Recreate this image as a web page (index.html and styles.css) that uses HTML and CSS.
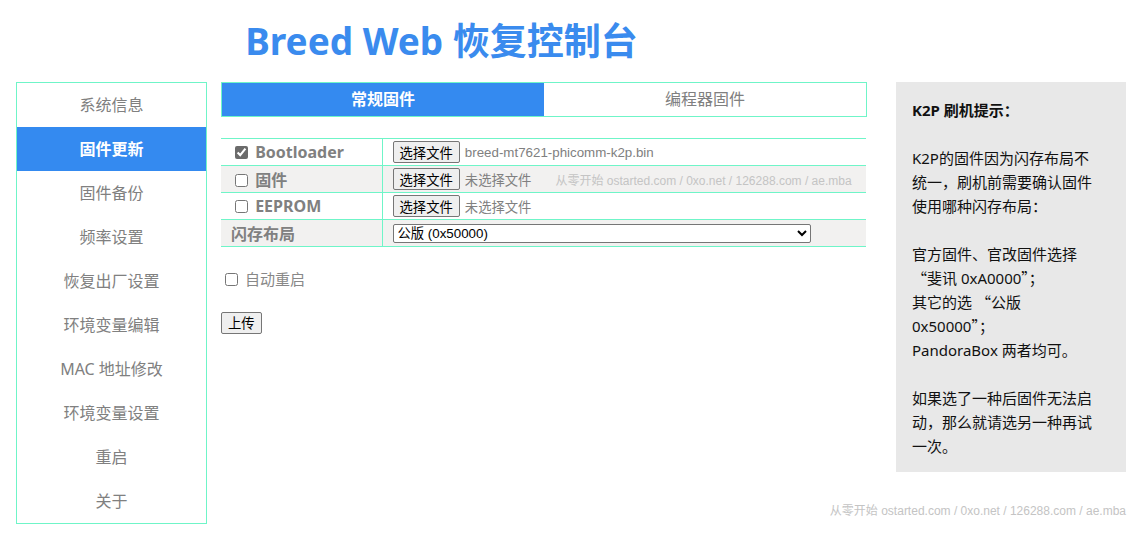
FILE: index.html
```html
<!DOCTYPE html>
<html lang="zh-CN">
<head>
<meta charset="utf-8">
<title>Breed Web 恢复控制台</title>
<link rel="stylesheet" href="styles.css">
</head>
<body>
<div class="page">
  <div class="left">
    <header class="header">
      <h1 class="title">Breed Web 恢复控制台</h1>
    </header>
    <div class="content">
      <nav class="sidebar">
        <a class="nav-item">系统信息</a>
        <a class="nav-item active">固件更新</a>
        <a class="nav-item">固件备份</a>
        <a class="nav-item">频率设置</a>
        <a class="nav-item">恢复出厂设置</a>
        <a class="nav-item">环境变量编辑</a>
        <a class="nav-item">MAC 地址修改</a>
        <a class="nav-item">环境变量设置</a>
        <a class="nav-item">重启</a>
        <a class="nav-item">关于</a>
      </nav>
      <main class="main">
        <div class="tabs">
          <div class="tab active">常规固件</div>
          <div class="tab">编程器固件</div>
        </div>
        <table class="fw-table">
          <tr>
            <td class="label"><input type="checkbox" class="cb cb-on" checked> Bootloader</td>
            <td class="field"><button class="btn">选择文件</button><span class="fname">breed-mt7621-phicomm-k2p.bin</span></td>
          </tr>
          <tr class="alt">
            <td class="label"><input type="checkbox" class="cb"> 固件</td>
            <td class="field"><button class="btn">选择文件</button><span class="fname">未选择文件</span><span class="watermark">从零开始 ostarted.com / 0xo.net / 126288.com / ae.mba</span></td>
          </tr>
          <tr>
            <td class="label"><input type="checkbox" class="cb"> EEPROM</td>
            <td class="field"><button class="btn">选择文件</button><span class="fname">未选择文件</span></td>
          </tr>
          <tr class="alt">
            <td class="label plain">闪存布局</td>
            <td class="field"><select class="sel"><option>公版 (0x50000)</option><option>斐讯 (0xA0000)</option></select></td>
          </tr>
        </table>
        <label class="reboot"><input type="checkbox" class="cb"> 自动重启</label>
        <div class="actions"><button class="btn">上传</button></div>
      </main>
    </div>
  </div>
  <aside class="right">
    <div class="tips">
      <p class="tips-title">K2P 刷机提示：</p>
      <p>K2P的固件因为闪存布局不<br>统一，刷机前需要确认固件<br>使用哪种闪存布局：</p>
      <p>官方固件、官改固件选择<br><span class="q">“</span>斐讯 0xA0000<span class="q">”；</span><br>其它的选 <span class="q">“</span>公版<br>0x50000<span class="q">”；</span><br>PandoraBox 两者均可。</p>
      <p>如果选了一种后固件无法启<br>动，那么就请选另一种再试<br>一次。</p>
    </div>
    <footer class="footer"><span>从零开始 ostarted.com / 0xo.net / 126288.com / ae.mba</span></footer>
  </aside>
</div>
</body>
</html>
```

FILE: styles.css
```css
* { box-sizing: border-box; }

body {
  margin: 0;
  background: #fff;
  font-family: "Noto Sans", "Noto Sans CJK SC", sans-serif;
  color: #808080;
}

.page {
  display: flex;
  padding: 0 16px;
}

.left {
  width: 851px;
  display: flex;
  flex-direction: column;
}

.header {
  height: 82px;
  display: flex;
  align-items: center;
  justify-content: center;
}

.title {
  margin: 0;
  font-size: 37px;
  font-weight: 700;
  color: #3a8bee;
  line-height: 1;
  padding-bottom: 1px;
}

.content {
  display: flex;
  gap: 14px;
  align-items: flex-start;
}

.sidebar {
  width: 191px;
  border: 1px solid #6ff5c8;
  display: flex;
  flex-direction: column;
}

.nav-item {
  height: 44px;
  line-height: 44px;
  text-align: center;
  font-size: 16px;
  color: #808080;
}

.nav-item.active {
  background: #348af0;
  color: #fff;
  font-weight: 700;
}

.main {
  width: 646px;
}

.tabs {
  display: flex;
  height: 35px;
  border: 1px solid #6ff5c8;
}

.tab {
  flex: 1;
  text-align: center;
  line-height: 33px;
  font-size: 16px;
  color: #808080;
}

.tab.active {
  background: #348af0;
  color: #fff;
  font-weight: 700;
}

.fw-table {
  margin-top: 21px;
  width: 645px;
  border-collapse: collapse;
}

.fw-table td {
  height: 27px;
  padding: 0 0 0 10px;
  border-top: 1px solid #6ff5c8;
  border-bottom: 1px solid #6ff5c8;
  vertical-align: middle;
  white-space: nowrap;
}

.fw-table tr.alt td {
  background: #f2f1f0;
}

.fw-table td.label {
  width: 161px;
  font-size: 16px;
  font-weight: 700;
  color: #808080;
  border-right: 1px solid #6ff5c8;
}

.cb {
  width: 13px;
  height: 13px;
  margin: 0 3px 0 4px;
  vertical-align: -1px;
  accent-color: #6b6b6b;
}

.field {
  font-family: "Liberation Sans", "Noto Sans CJK SC", sans-serif;
  font-size: 13.33px;
}

.btn {
  font-family: "Liberation Sans", "Noto Sans CJK SC", sans-serif;
  font-size: 13.33px;
  color: #000;
  background: #efefef;
  border: 1px solid #767676;
  border-radius: 2px;
  height: 22px;
  padding: 0 6px;
  vertical-align: middle;
}

.fname {
  margin-left: 5px;
  color: #808080;
  vertical-align: middle;
}

.watermark {
  margin-left: 24px;
  font-size: 12px;
  color: #c4c4c4;
  vertical-align: middle;
}

.sel {
  width: 418px;
  height: 19px;
  font-family: "Liberation Sans", "Noto Sans CJK SC", sans-serif;
  font-size: 13.33px;
  color: #000;
  background: #fff;
  border: 1px solid #767676;
  border-radius: 2px;
  padding: 0;
  vertical-align: middle;
}

.reboot {
  display: block;
  margin-top: 21px;
  font-size: 15px;
  color: #888;
}

.actions {
  margin-top: 21px;
}

.right {
  width: 230px;
  margin-left: 29px;
  padding-top: 82px;
}

.tips {
  background: #e8e8e8;
  padding: 16px 16px 14px;
  font-size: 15px;
  line-height: 24px;
  color: #111;
  height: 390px;
}

.tips p {
  margin: 0 0 24px;
}

.tips p:last-child {
  margin-bottom: 0;
}

.tips .tips-title {
  font-weight: 700;
}

.q {
  font-family: "Noto Sans CJK SC", sans-serif;
}

.footer {
  margin-top: 29px;
  display: flex;
  justify-content: flex-end;
  font-family: "Liberation Sans", "Noto Sans CJK SC", sans-serif;
  font-size: 12px;
  color: #c4c4c4;
  white-space: nowrap;
}

.footer span {
  flex: none;
}
```
